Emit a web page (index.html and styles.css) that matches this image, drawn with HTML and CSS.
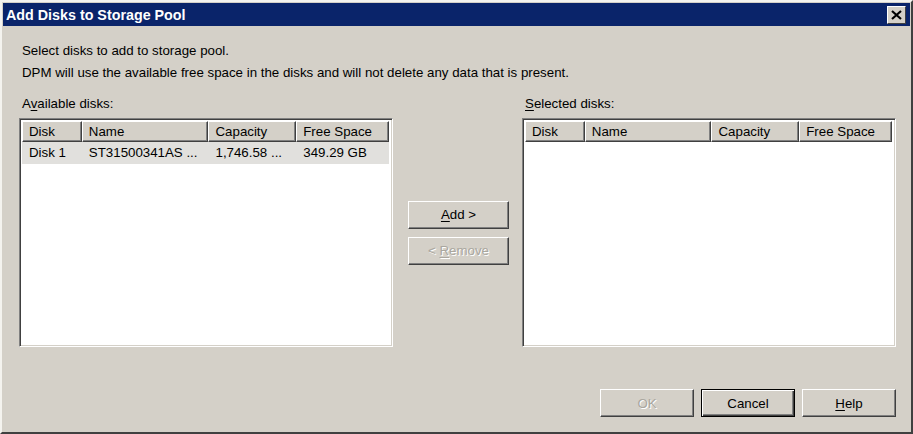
FILE: index.html
```html
<!DOCTYPE html>
<html>
<head>
<meta charset="utf-8">
<link rel="stylesheet" href="styles.css">
</head>
<body>
<div class="window">
  <div class="titlebar">
    <span class="title">Add Disks to Storage Pool</span>
    <span class="close"><svg width="11" height="10" viewBox="0 0 11 10"><path d="M1 1 L10 9 M10 1 L1 9" stroke="#000" stroke-width="2.2"/></svg></span>
  </div>
  <div class="content">
    <p class="intro">Select disks to add to storage pool.</p>
    <p class="intro second">DPM will use the available free space in the disks and will not delete any data that is present.</p>
    <div class="lists">
      <div class="pane">
        <div class="label">A<u>v</u>ailable disks:</div>
        <div class="listview">
          <div class="header">
            <div class="hcell c1">Disk</div>
            <div class="hcell c2">Name</div>
            <div class="hcell c3">Capacity</div>
            <div class="hcell c4">Free Space</div>
          </div>
          <div class="row selected">
            <div class="cell c1">Disk 1</div>
            <div class="cell c2">ST31500341AS ...</div>
            <div class="cell c3">1,746.58 ...</div>
            <div class="cell c4">349.29 GB</div>
          </div>
        </div>
      </div>
      <div class="middle">
        <button class="btn wide"><u>A</u>dd &gt;</button>
        <button class="btn wide disabled">&lt; <u>R</u>emove</button>
      </div>
      <div class="pane">
        <div class="label"><u>S</u>elected disks:</div>
        <div class="listview">
          <div class="header">
            <div class="hcell c1">Disk</div>
            <div class="hcell c2">Name</div>
            <div class="hcell c3">Capacity</div>
            <div class="hcell c4">Free Space</div>
          </div>
        </div>
      </div>
    </div>
    <div class="footer">
      <button class="btn foot disabled">OK</button>
      <button class="btn foot default">Cancel</button>
      <button class="btn foot"><u>H</u>elp</button>
    </div>
  </div>
</div>
</body>
</html>
```
FILE: styles.css
```css
* { box-sizing: border-box; }
html, body { margin: 0; padding: 0; background: #d4d0c8; }
body { font-family: "Liberation Sans", Arial, sans-serif; font-size: 13.3px; color: #000; }
u { text-decoration: underline; text-underline-offset: 2px; }

.window {
  width: 913px;
  height: 434px;
  background: #d4d0c8;
  border-top: 2px solid #f4f3ef;
  border-left: 2px solid #f4f3ef;
  border-right: 2px solid #404040;
  border-bottom: 2px solid #404040;
  display: flex;
  flex-direction: column;
}

.titlebar {
  height: 23px;
  margin: 1px 1px 0 1px;
  background: #0a246a;
  display: flex;
  align-items: center;
  justify-content: space-between;
  padding: 0 4px 0 3px;
}
.title { color: #fff; font-weight: bold; font-size: 14.3px; }
.close {
  width: 19px;
  height: 18px;
  background: #d4d0c8;
  border-top: 1px solid #fff;
  border-left: 1px solid #fff;
  border-right: 1px solid #404040;
  border-bottom: 1px solid #404040;
  display: flex;
  align-items: center;
  justify-content: center;
}

.content {
  flex: 1;
  display: flex;
  flex-direction: column;
  padding: 14px 15px 0 17px;
}
.intro { margin: 0 0 0 3px; line-height: 22px; height: 22px; }

.lists {
  display: grid;
  grid-template-columns: 374px 1fr 374px;
  margin-top: 9px;
}
.label { margin-left: 3px; height: 25px; line-height: 22px; }
.listview {
  height: 229px;
  background: #fff;
  border-top: 1px solid #808080;
  border-left: 1px solid #808080;
  border-right: 1px solid #fff;
  border-bottom: 1px solid #fff;
  box-shadow: inset 1px 1px 0 #404040, inset -1px -1px 0 #d4d0c8;
  padding: 2px 3px 2px 2px;
}
.header { display: flex; height: 21px; }
.hcell {
  background: #d4d0c8;
  border-top: 1px solid #fff;
  border-left: 1px solid #fff;
  border-right: 1px solid #404040;
  border-bottom: 1px solid #404040;
  box-shadow: inset -1px -1px 0 #808080;
  padding-left: 6px;
  line-height: 19px;
  white-space: nowrap;
  overflow: hidden;
}
.c1 { width: 60px; }
.c2 { width: 127px; }
.c3 { width: 88px; }
.c4 { width: 93px; }
.row { display: flex; height: 22px; line-height: 21px; }
.row.selected { background: #e1e0dd; }
.cell { padding-left: 7px; white-space: nowrap; }

.middle {
  display: flex;
  flex-direction: column;
  justify-content: center;
  align-items: center;
  gap: 8px;
  padding-top: 25px;
  padding-left: 2px;
}

.btn {
  font-family: "Liberation Sans", Arial, sans-serif;
  font-size: 13.3px;
  color: #000;
  background: #d4d0c8;
  height: 28px;
  border-top: 1px solid #fff;
  border-left: 1px solid #fff;
  border-right: 1px solid #404040;
  border-bottom: 1px solid #404040;
  box-shadow: inset -1px -1px 0 #808080;
  padding: 0;
}
.btn.wide { width: 101px; }
.btn.disabled { color: #aaa79f; text-shadow: 1px 1px 0 #fff; }
.btn.default { border: 1px solid #000; box-shadow: inset 1px 1px 0 #fff, inset -1px -1px 0 #404040, inset -2px -2px 0 #808080; }

.footer {
  display: flex;
  justify-content: flex-end;
  gap: 7px;
  margin-top: 42px;
}
.btn.foot { width: 94px; }
```
